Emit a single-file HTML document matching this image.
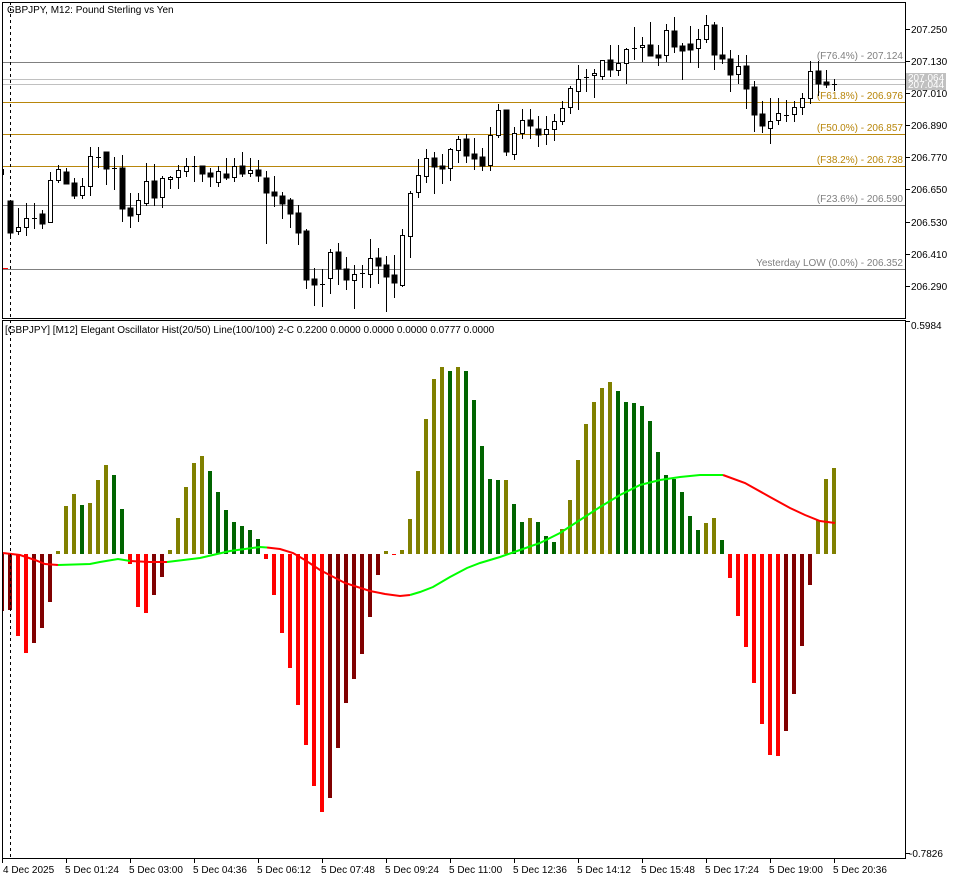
<!DOCTYPE html>
<html><head><meta charset="utf-8"><style>
html,body{margin:0;padding:0;background:#fff;width:958px;height:880px;overflow:hidden}
svg{display:block}
text{font-family:"Liberation Sans","DejaVu Sans",sans-serif;font-size:10px}
</style></head><body>
<svg width="958" height="880" viewBox="0 0 958 880" xmlns="http://www.w3.org/2000/svg" shape-rendering="crispEdges">
<rect width="958" height="880" fill="#fff"/>
<!-- fib lines -->
<g stroke-width="1">
<line x1="2" x2="905" y1="62.5" y2="62.5" stroke="#808080"/>
<line x1="2" x2="905" y1="79.5" y2="79.5" stroke="#c0c0c0"/>
<line x1="2" x2="905" y1="84.5" y2="84.5" stroke="#c0c0c0"/>
<line x1="2" x2="905" y1="102.5" y2="102.5" stroke="#b8860b"/>
<line x1="2" x2="905" y1="134.5" y2="134.5" stroke="#b8860b"/>
<line x1="2" x2="905" y1="166.5" y2="166.5" stroke="#b8860b"/>
<line x1="2" x2="905" y1="205.5" y2="205.5" stroke="#808080"/>
<line x1="2" x2="905" y1="269.5" y2="269.5" stroke="#808080"/>
</g>
<g text-anchor="end">
<text x="903" y="59" fill="#808080">(F76.4%) - 207.124</text>
<text x="903" y="99" fill="#b8860b">(F61.8%) - 206.976</text>
<text x="903" y="131" fill="#b8860b">(F50.0%) - 206.857</text>
<text x="903" y="163" fill="#b8860b">(F38.2%) - 206.738</text>
<text x="903" y="202" fill="#808080">(F23.6%) - 206.590</text>
<text x="903" y="266" fill="#808080">Yesterday LOW (0.0%) - 206.352</text>
</g>
<line x1="3" x2="8" y1="268.5" y2="268.5" stroke="#f00"/>
<rect x="2" y="169" width="2" height="6" fill="#000"/>
<!-- candles -->
<g id="c" stroke="#000" fill="#000"></g>
<g id="h"></g>
<g id="l" fill="none" stroke-width="2" shape-rendering="auto"></g>
<!-- dashed line -->
<line x1="10.5" x2="10.5" y1="2" y2="858" stroke="#000" stroke-dasharray="3,3"/>
<!-- frames -->
<g fill="none" stroke="#000">
<rect x="2.5" y="2.5" width="903" height="316"/>
<rect x="2.5" y="320.5" width="903" height="538"/>
</g>
<text x="7" y="13" fill="#000">GBPJPY, M12:  Pound Sterling vs Yen</text>
<text x="5" y="333" fill="#000">[GBPJPY] [M12] Elegant Oscillator Hist(20/50) Line(100/100) 2-C 0.2200 0.0000 0.0000 0.0000 0.0777 0.0000</text>
<!-- price axis -->
<g stroke="#000">
<line x1="905" x2="910" y1="29.5" y2="29.5"/><line x1="905" x2="910" y1="61.5" y2="61.5"/>
<line x1="905" x2="910" y1="93.5" y2="93.5"/><line x1="905" x2="910" y1="125.5" y2="125.5"/>
<line x1="905" x2="910" y1="157.5" y2="157.5"/><line x1="905" x2="910" y1="189.5" y2="189.5"/>
<line x1="905" x2="910" y1="222.5" y2="222.5"/><line x1="905" x2="910" y1="254.5" y2="254.5"/>
<line x1="905" x2="910" y1="286.5" y2="286.5"/>
<line x1="905" x2="910" y1="321.5" y2="321.5"/><line x1="905" x2="910" y1="853.5" y2="853.5"/>
</g>
<g fill="#000">
<text x="911" y="33">207.250</text><text x="911" y="65">207.130</text>
<text x="911" y="97">207.010</text><text x="911" y="129">206.890</text>
<text x="911" y="161">206.770</text><text x="911" y="193">206.650</text>
<text x="911" y="226">206.530</text><text x="911" y="258">206.410</text>
<text x="911" y="290">206.290</text>
<text x="911" y="329">0.5984</text><text x="909" y="857">-0.7826</text>
</g>
<rect x="906" y="73" width="40" height="17" fill="#c0c0c0"/>
<text x="908" y="81" fill="#fff">207.064</text>
<text x="908" y="88" fill="#fff">207.044</text>
<!-- time axis -->
<g id="t"></g>
<g fill="#000">
<text x="3" y="873">4 Dec 2025</text><text x="65" y="873">5 Dec 01:24</text>
<text x="129" y="873">5 Dec 03:00</text><text x="193" y="873">5 Dec 04:36</text>
<text x="257" y="873">5 Dec 06:12</text><text x="321" y="873">5 Dec 07:48</text>
<text x="385" y="873">5 Dec 09:24</text><text x="449" y="873">5 Dec 11:00</text>
<text x="513" y="873">5 Dec 12:36</text><text x="577" y="873">5 Dec 14:12</text>
<text x="641" y="873">5 Dec 15:48</text><text x="705" y="873">5 Dec 17:24</text>
<text x="769" y="873">5 Dec 19:00</text><text x="833" y="873">5 Dec 20:36</text>
</g>
</svg>
<script>
var NS="http://www.w3.org/2000/svg";
function el(p,n,a){var e=document.createElementNS(NS,n);for(var k in a)e.setAttribute(k,a[k]);p.appendChild(e);return e;}
var C=[["B",201,232,201,238],["W",227,231,208,234],["W",218,227,203,235],["D",218,218,203,228],["B",214,223,210,228],["W",180,222,172,222],["W",169,180,165,182],["B",172,183,168,183],["B",183,195,178,198],["W",186,195,178,198],["W",156,186,147,195],["D",157,157,147,167],["B",152,168,152,184],["D",168,169,157,189],["B",168,208,155,221],["B",208,215,193,227],["W",200,214,193,221],["W",181,203,163,205],["B",181,197,164,205],["W",178,197,176,207],["W",177,179,176,188],["W",170,177,165,188],["W",166,171,158,176],["D",166,166,156,181],["B",166,173,166,181],["B",173,176,168,186],["W",171,182,166,186],["B",174,177,158,179],["W",166,177,158,181],["B",166,173,152,176],["W",170,173,158,176],["B",170,175,160,181],["B",178,192,171,243],["B",192,195,176,206],["B",196,203,192,218],["B",200,213,198,227],["B",213,232,205,244],["B",231,279,229,288],["B",279,284,268,305],["D",284,284,269,306],["W",252,278,249,293],["B",252,268,243,284],["B",269,279,257,289],["W",274,280,265,308],["D",273,273,265,287],["W",258,274,239,287],["B",258,265,248,283],["B",265,276,256,311],["B",275,282,255,297],["W",235,285,229,286],["W",193,236,191,257],["W",175,192,159,197],["W",158,176,149,182],["B",158,166,152,193],["B",166,168,154,183],["W",149,168,148,180],["W",139,150,136,162],["B",139,155,134,162],["B",154,158,138,169],["B",157,165,148,170],["W",135,165,127,170],["W",110,135,104,137],["B",110,151,110,155],["W",133,154,127,159],["W",120,133,109,138],["B",120,125,109,138],["B",129,134,116,146],["W",129,134,116,144],["W",121,129,114,140],["W",108,121,101,124],["W",88,107,86,113],["W",79,91,65,109],["D",77,77,69,91],["W",73,75,69,97],["W",60,76,60,79],["B",60,69,45,76],["W",63,70,45,75],["W",49,63,48,83],["D",48,48,27,59],["W",45,47,37,61],["B",45,55,22,55],["B",55,57,45,65],["W",30,55,24,61],["B",31,46,17,52],["B",46,50,43,79],["B",44,49,26,62],["W",39,48,29,67],["W",25,39,15,42],["B",25,54,22,69],["B",55,58,27,63],["B",59,74,50,91],["W",66,74,55,83],["B",66,88,55,108],["B",87,114,81,131],["B",114,125,101,132],["W",121,128,98,143],["W",113,120,98,124],["D",115,115,100,121],["W",107,114,101,121],["W",98,107,93,114],["W",71,98,61,103],["B",71,83,61,95],["B",82,84,70,87],["D",84,84,79,90]];
var g=document.getElementById("c");
C.forEach(function(c,i){var p=10+8*i;
el(g,"line",{x1:p+.5,x2:p+.5,y1:c[3],y2:c[4]+1});
if(c[0]=="B")el(g,"rect",{x:p-2,y:c[1],width:5,height:c[2]-c[1]+1});
else if(c[0]=="W")el(g,"rect",{x:p-1.5,y:c[1]+.5,width:4,height:Math.max(1,c[2]-c[1]),fill:"#fff"});
else el(g,"line",{x1:p-2,x2:p+3,y1:c[1]+.5,y2:c[1]+.5});});
var O="#808000",G="#006400",R="#ff0000",D="#800000";
var H=[[D,611],[D,610],[R,636],[R,653],[D,643],[D,628],[D,602],[O,551],[O,506],[O,494],[G,505],[O,503],[O,480],[O,465],[G,475],[G,509],[R,564],[R,607],[R,613],[D,595],[D,577],[O,550],[O,518],[O,487],[O,463],[O,456],[G,471],[G,492],[G,510],[G,522],[G,526],[G,530],[G,539],[R,559],[R,595],[R,633],[R,668],[R,705],[R,745],[R,786],[R,812],[D,798],[D,748],[D,703],[D,679],[D,654],[D,617],[D,575],[O,551],[R,555],[O,550],[O,519],[O,471],[O,419],[O,379],[O,367],[G,371],[O,367],[G,371],[G,400],[G,446],[G,479],[G,480],[O,480],[G,504],[G,522],[O,518],[G,522],[G,536],[G,542],[O,529],[O,500],[O,460],[O,424],[O,402],[O,388],[O,382],[G,391],[G,402],[G,403],[G,406],[G,421],[G,452],[G,475],[G,479],[G,492],[G,516],[G,530],[O,523],[O,518],[G,540],[R,578],[R,616],[R,647],[R,683],[R,724],[R,755],[R,756],[D,731],[D,694],[D,646],[D,585],[O,520],[O,479],[O,468]];
var h=document.getElementById("h");var Z=554;
H.forEach(function(b,k){var p=10+8*(k-1);var x=Math.max(3,p-2),w=p+2-x;var y=b[1];
if(y<Z)el(h,"rect",{x:x,y:y,width:w,height:Z-y,fill:b[0]});else el(h,"rect",{x:x,y:Z,width:w,height:Math.max(1,y-Z),fill:b[0]});});
var L=[[R,"3,553 20,555 35,560 45,564 58,565"],[G,"58,565 90,564 100,562 118,559 130,561"],[R,"130,561 150,562 167,562"],[G,"167,562 200,558 230,551 260,547 267,547.5"],[R,"267,547.5 280,549 293,553 305,560 320,570 345,583 370,591 385,594 400,596 410,595"],["#00ff00","410,595 420,592 433,587 450,577 467,568 480,563 500,557 520,550 540,543 560,533 580,520 600,507 620,495 640,485 660,480 680,477 700,475 723,475"],[R,"723,475 745,483 770,497 790,508 805,515 820,521 835,523"]];
var l=document.getElementById("l");
L.forEach(function(s){el(l,"polyline",{points:s[1],stroke:s[0]=="#006400"?"#00ff00":s[0]});});
var t=document.getElementById("t");
for(var k=0;k<14;k++){var x=2.5+64*k;el(t,"line",{x1:x,x2:x,y1:858,y2:863,stroke:"#000"});}
</script>
</body></html>
